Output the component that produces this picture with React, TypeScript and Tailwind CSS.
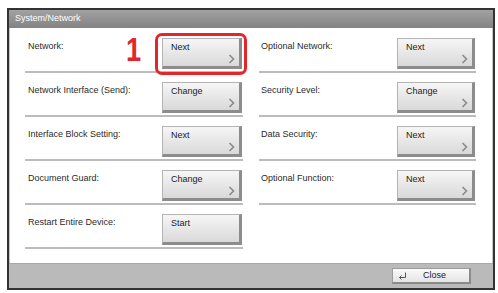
import React from 'react';

interface Setting {
  label: string;
  action: string;
}

const leftItems: Setting[] = [
  { label: 'Network:', action: 'Next' },
  { label: 'Network Interface (Send):', action: 'Change' },
  { label: 'Interface Block Setting:', action: 'Next' },
  { label: 'Document Guard:', action: 'Change' },
  { label: 'Restart Entire Device:', action: 'Start' },
];

const rightItems: Setting[] = [
  { label: 'Optional Network:', action: 'Next' },
  { label: 'Security Level:', action: 'Change' },
  { label: 'Data Security:', action: 'Next' },
  { label: 'Optional Function:', action: 'Next' },
];

const PanelButton: React.FC<{ text: string; width: string; chevron: boolean }> = ({ text, width, chevron }) => (
  <div
    className={`relative h-[31px] ${width} border-t border-l border-t-[#b4b4b4] border-l-[#b4b4b4] border-r-[3px] border-b-[3px] border-r-[#8c8c8c] border-b-[#8c8c8c] bg-gradient-to-b from-[#f6f6f6] to-[#d9d9d9]`}
  >
    <span className="absolute left-[8px] top-[2px] text-[9px] text-[#222]">{text}</span>
    {chevron && (
      <svg className="absolute right-[4px] bottom-[2px]" width="7" height="10" viewBox="0 0 7 10">
        <polyline points="1.5,1 5.5,5 1.5,9" fill="none" stroke="#8a8a8a" strokeWidth="1.6" />
      </svg>
    )}
  </div>
);

const Row: React.FC<{ item: Setting; btnWidth: string; labelPad: string; highlight?: boolean }> = ({
  item,
  btnWidth,
  labelPad,
  highlight,
}) => (
  <div className="h-[44px] pt-[9px] border-b-2 border-[#bcbcbc] flex justify-between items-start">
    <span className={`${labelPad} pt-[2px] text-[9px] text-[#2a2a2a]`}>{item.label}</span>
    <div className="relative pr-[1px]">
      {highlight && (
        <>
          <span className="absolute right-[100px] top-[-6px] text-[34px] leading-none font-bold text-[#e3262b] scale-x-80">1</span>
          <div className="absolute left-[-7px] right-[-4px] top-[-5px] bottom-[-6px] border-[3px] border-[#e3262b] rounded-[7px]" />
        </>
      )}
      <PanelButton text={item.action} width={btnWidth} chevron={item.action !== 'Start'} />
    </div>
  </div>
);

const App: React.FC = () => {
  return (
    <div className="w-[498px] h-[293px] bg-white pt-[8px] pl-[7px]" style={{ fontFamily: '"Liberation Sans", Arial, sans-serif' }}>
      <div className="w-[488px] h-[282px] border-2 border-[#333] flex flex-col bg-white">
        {/* title bar */}
        <div className="h-[18px] bg-gradient-to-b from-[#a2a2a2] to-[#838383] flex items-center pl-[6px]">
          <span className="text-[9px] text-white">System/Network</span>
        </div>

        {/* settings */}
        <div className="flex-1 border-l border-r border-[#c6c6c6] pt-[1px] pl-[15px] pr-[16px] flex gap-[16px]">
          <div className="w-[218px] flex flex-col">
            {leftItems.map((item, i) => (
              <Row key={i} item={item} btnWidth="w-[80px]" labelPad="pl-[3px]" highlight={i === 0} />
            ))}
          </div>
          <div className="w-[217px] flex flex-col">
            {rightItems.map((item, i) => (
              <Row key={i} item={item} btnWidth="w-[78px]" labelPad="pl-[2px]" />
            ))}
          </div>
        </div>

        {/* bottom bar */}
        <div className="h-[25px] bg-[#bababa] border-t border-[#a8a8a8] flex items-center justify-end pr-[22px]">
          <div className="w-[79px] h-[16px] bg-gradient-to-b from-[#fafafa] to-[#e4e4e4] border border-[#9c9c9c] border-r-2 border-b-2 border-r-[#8a8a8a] border-b-[#8a8a8a] flex items-center">
            <svg className="ml-[5px]" width="9" height="8" viewBox="0 0 9 8">
              <polyline points="7.5,0.5 7.5,5.5 1.5,5.5" fill="none" stroke="#555" strokeWidth="1" />
              <polyline points="3.5,3.5 1.5,5.5 3.5,7.5" fill="none" stroke="#555" strokeWidth="1" />
            </svg>
            <span className="ml-[16px] text-[9px] text-[#222]">Close</span>
          </div>
        </div>
      </div>
    </div>
  );
};

export default App;
